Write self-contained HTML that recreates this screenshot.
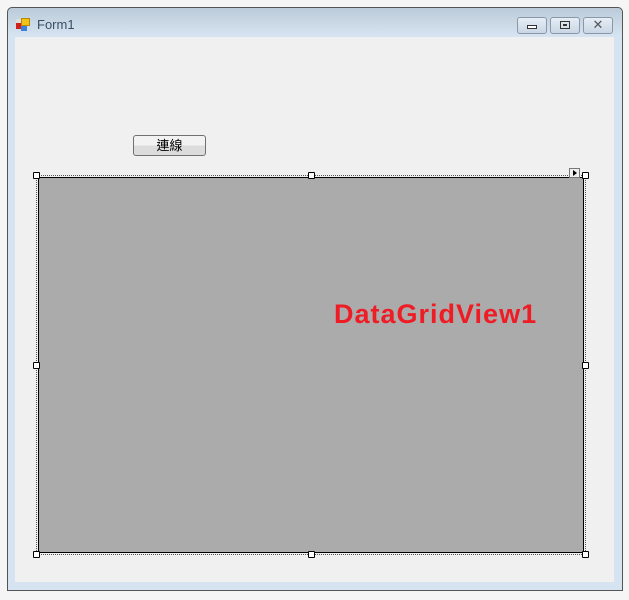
<!DOCTYPE html>
<html><head><meta charset="utf-8"><style>
body{margin:0;width:629px;height:600px;background:#f5f5f5;position:relative;overflow:hidden;font-family:"Liberation Sans","Noto Sans CJK TC",sans-serif}
.a{position:absolute;box-sizing:border-box}
.win{left:7px;top:7px;width:616px;height:584px;border:1px solid #555;border-radius:5px 5px 0 0;background:linear-gradient(#bccbd9 0,#d6e4f1 28px,#d6e4f1 100%)}
.client{left:15px;top:37px;width:599px;height:545px;background:#f0f0f0}
.cb{top:17px;width:30px;height:17px;border:1px solid #8b97a6;border-radius:3px;background:linear-gradient(#e6eef6,#c9d6e4)}
.h{width:7px;height:7px;background:#fff;border:1px solid #000;border-radius:1px}
</style></head><body>
<div class="a win"></div>
<div class="a" style="left:16px;top:19px;width:8px;height:8px;background:#ddd"></div>
<div class="a" style="left:21px;top:18px;width:9px;height:8px;background:#f3c21a;border:1px solid #b58a00"></div>
<div class="a" style="left:16px;top:23px;width:5px;height:6px;background:#d0201b"></div>
<div class="a" style="left:21px;top:26px;width:6px;height:5px;background:#3b82d8"></div>
<div class="a" style="left:37px;top:17px;font-size:13px;color:#3a4e66">Form1</div>
<div class="a cb" style="left:517px"><div class="a" style="left:9px;top:7px;width:10px;height:4px;border:1px solid #333;background:#fff"></div></div>
<div class="a cb" style="left:550px"><div class="a" style="left:9px;top:3px;width:10px;height:8px;border:1px solid #333"></div><div class="a" style="left:12px;top:6px;width:4px;height:2px;background:#333"></div></div>
<div class="a cb" style="left:583px;font-size:13px;line-height:14px;text-align:center;color:#555">✕</div>
<div class="a client"></div>
<div class="a" style="left:133px;top:135px;width:73px;height:21px;border:1px solid #707070;border-radius:3px;background:linear-gradient(#f2f2f2 50%,#dcdcdc 50%);font-size:13px;line-height:19px;text-align:center;color:#000">連線</div>
<div class="a" style="left:36px;top:175px;width:550px;height:380px;border:1px dotted #555"></div>
<div class="a" style="left:38px;top:177px;width:546px;height:376px;background:#ababab;border:1px solid #000"></div>
<div class="a" style="left:334px;top:299px;font-size:27px;font-weight:bold;color:#ee1c24;letter-spacing:1px">DataGridView1</div>
<div class="a" style="left:569px;top:168px;width:11px;height:10px;border:1px solid #777;background:#f0f0f0"><div class="a" style="left:3px;top:1px;border-left:4px solid #000;border-top:3px solid transparent;border-bottom:3px solid transparent"></div></div>
<div class="a h" style="left:33px;top:172px"></div>
<div class="a h" style="left:308px;top:172px"></div>
<div class="a h" style="left:582px;top:172px"></div>
<div class="a h" style="left:33px;top:362px"></div>
<div class="a h" style="left:582px;top:362px"></div>
<div class="a h" style="left:33px;top:551px"></div>
<div class="a h" style="left:308px;top:551px"></div>
<div class="a h" style="left:582px;top:551px"></div>
</body></html>
